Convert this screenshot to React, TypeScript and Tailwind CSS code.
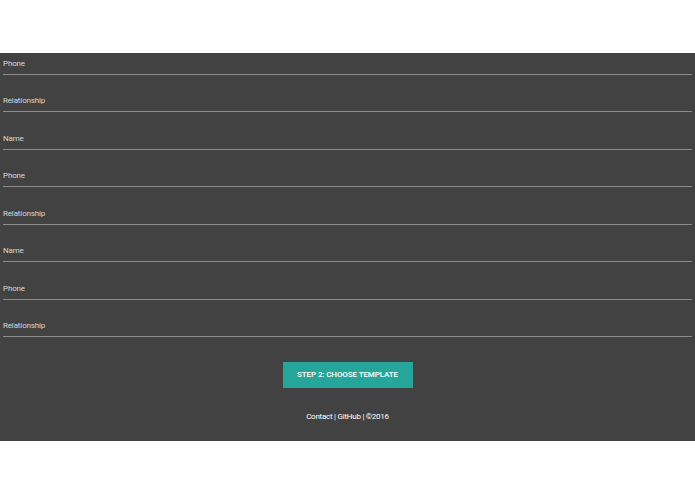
import React from "react";

const rows = ["Relationship", "Name", "Phone", "Relationship", "Name", "Phone", "Relationship"];

function Field({ label, first }: { label: string; first?: boolean }) {
  return (
    <div
      className={`flex items-end border-b border-[#8d8d8d] pb-[5px] ${
        first ? "h-[21.5px]" : "h-[37.5px]"
      }`}
    >
      <span className="text-[8px] leading-[10px] tracking-[-0.15px] text-[#d6d6d6]">{label}</span>
    </div>
  );
}

export default function App() {
  return (
    <div
      className="h-[494px] w-[695px] bg-white"
      style={{ fontFamily: "Roboto, 'Liberation Sans', sans-serif" }}
    >
      <div className="h-[53px]" />
      <div className="flex h-[388px] flex-col bg-[#424242]">
        <div className="px-[3px]">
          <Field label="Phone" first />
          {rows.map((r, i) => (
            <Field key={i} label={r} />
          ))}
        </div>
        <div className="mt-[25px] flex justify-center">
          <button
            type="button"
            className="h-[26px] w-[130px] bg-[#26a69a] text-[8px] font-medium tracking-[-0.1px] text-white"
          >
            STEP 2: CHOOSE TEMPLATE
          </button>
        </div>
        <p className="mt-[24px] text-center text-[8px] leading-[10px] tracking-[-0.25px] text-white">
          Contact | GitHub | ©2016
        </p>
      </div>
    </div>
  );
}
